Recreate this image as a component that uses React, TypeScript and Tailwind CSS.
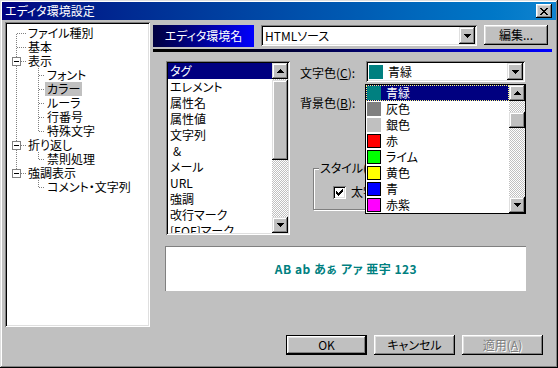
import React from 'react';

const raised =
  'shadow-[inset_-1px_-1px_#000000,inset_1px_1px_#ffffff,inset_-2px_-2px_#808080,inset_2px_2px_#dfdfdf]';
const sbRaised =
  'shadow-[inset_-1px_-1px_#000000,inset_1px_1px_#dfdfdf,inset_-2px_-2px_#808080,inset_2px_2px_#ffffff]';
const sunken =
  'shadow-[inset_1px_1px_#808080,inset_-1px_-1px_#ffffff,inset_2px_2px_#000000,inset_-2px_-2px_#dfdfdf]';
const dither = 'bg-[repeating-conic-gradient(#c0c0c0_0%_25%,#ffffff_0%_50%)] bg-size-[2px_2px]';

const Arrow = ({ up = false }: { up?: boolean }) => (
  <svg width="7" height="4" viewBox="0 0 7 4" shapeRendering="crispEdges">
    {up ? (
      <path d="M3 0h1v1h1v1h1v1h1v1H0V3h1V2h1V1h1z" fill="#000" />
    ) : (
      <path d="M0 0h7v1H6v1H5v1H4v1H3V3H2V2H1V1H0z" fill="#000" />
    )}
  </svg>
);

const ScrollBtn = ({ up = false, h = 'h-[16px]' }: { up?: boolean; h?: string }) => (
  <div className={`w-[16px] ${h} shrink-0 bg-[#c0c0c0] ${sbRaised} flex items-center justify-center`}>
    <Arrow up={up} />
  </div>
);

type V = 'full' | 'top' | 'bottom' | 'none';
type Row = { t: string; lvl: 0 | 1; v0: V; v1?: V; box?: boolean; sel?: boolean };

const rows: Row[] = [
  { t: 'ファイル種別', lvl: 0, v0: 'bottom' },
  { t: '基本', lvl: 0, v0: 'full' },
  { t: '表示', lvl: 0, v0: 'full', box: true },
  { t: 'フォント', lvl: 1, v0: 'full', v1: 'full' },
  { t: 'カラー', lvl: 1, v0: 'full', v1: 'full', sel: true },
  { t: 'ルーラ', lvl: 1, v0: 'full', v1: 'full' },
  { t: '行番号', lvl: 1, v0: 'full', v1: 'full' },
  { t: '特殊文字', lvl: 1, v0: 'full', v1: 'top' },
  { t: '折り返し', lvl: 0, v0: 'full', box: true },
  { t: '禁則処理', lvl: 1, v0: 'full', v1: 'top' },
  { t: '強調表示', lvl: 0, v0: 'top', box: true },
  { t: 'コメント・文字列', lvl: 1, v0: 'none', v1: 'top' },
];

function Connector({ r }: { r: Row }) {
  const w = r.lvl === 0 ? 18 : 37;
  const px: [number, number][] = [];
  const vert = (x: number, a: number, b: number) => {
    for (let y = a; y < b; y++) if ((x + y) % 2 === 0) px.push([x, y]);
  };
  const horz = (y: number, a: number, b: number) => {
    for (let x = a; x < b; x++) if ((x + y) % 2 === 0) px.push([x, y]);
  };
  if (r.box) {
    vert(8, 0, 3);
    if (r.v0 === 'full') vert(8, 12, 14);
    horz(7, 13, 18);
  } else if (r.lvl === 0) {
    if (r.v0 === 'full') vert(8, 0, 14);
    if (r.v0 === 'bottom') vert(8, 7, 14);
    horz(7, 8, 18);
  } else {
    if (r.v0 === 'full') vert(8, 0, 14);
    if (r.v1 === 'full') vert(30, 0, 14);
    if (r.v1 === 'top') vert(30, 0, 8);
    horz(7, 30, 37);
  }
  return (
    <svg width={w} height={14} className="shrink-0" shapeRendering="crispEdges">
      {px.map(([x, y]) => (
        <rect key={`${x}-${y}`} x={x} y={y} width={1} height={1} fill="#808080" />
      ))}
      {r.box && (
        <>
          <rect x={4.5} y={3.5} width={8} height={8} fill="#ffffff" stroke="#808080" />
          <rect x={6} y={7} width={5} height={1} fill="#000000" />
        </>
      )}
    </svg>
  );
}

const listItems = ['タグ', 'エレメント', '属性名', '属性値', '文字列', '&', 'メール', 'URL', '強調', '改行マーク', '[EOF]マーク'];

const colors: [string, string, boolean][] = [
  ['青緑', 'bg-[#008080]', false],
  ['灰色', 'bg-[#808080]', false],
  ['銀色', 'bg-[#c0c0c0]', false],
  ['赤', 'bg-[#ff0000]', true],
  ['ライム', 'bg-[#00ff00]', true],
  ['黄色', 'bg-[#ffff00]', true],
  ['青', 'bg-[#0000ff]', true],
  ['赤紫', 'bg-[#ff00ff]', true],
];

const App = () => {
  return (
    <div
      className={`w-[558px] h-[368px] bg-[#c0c0c0] p-[2px] flex flex-col text-[12px] text-black font-['Noto_Sans_CJK_JP',sans-serif] [font-feature-settings:'palt'] shadow-[inset_-1px_-1px_#000000,inset_1px_1px_#dfdfdf,inset_-2px_-2px_#808080,inset_2px_2px_#ffffff]`}
    >
      {/* title bar */}
      <div className="h-[18px] shrink-0 flex items-center justify-between bg-linear-to-r from-[#000080] to-[#1084d0] pl-[3px] pr-[4px]">
        <span className="text-white leading-[18px]">エディタ環境設定</span>
        <div className={`w-[16px] h-[14px] bg-[#c0c0c0] ${raised} flex items-center justify-center`}>
          <svg width="8" height="7" viewBox="0 0 8 7" shapeRendering="crispEdges">
            <path
              d="M0 0h2v1h1v1h2V1h1V0h2v1H7v1H6v1H5v1h1v1h1v1h1v1H6V6H5V5H3v1H2v1H0V6h1V5h1V4h1V3H2V2H1V1H0z"
              fill="#000"
            />
          </svg>
        </div>
      </div>

      <div className="flex pl-[3px] pt-[2px] gap-[3px]">
        {/* tree */}
        <div className={`w-[145px] h-[305px] shrink-0 bg-white ${sunken} pt-[4px] pl-[3px] overflow-hidden`}>
          {rows.map((r) => (
            <div key={r.t} className="flex h-[14px] items-center">
              <Connector r={r} />
              <span className={`px-[2px] h-[14px] leading-[14px] whitespace-nowrap ${r.sel ? 'bg-[#c0c0c0]' : ''}`}>
                {r.t}
              </span>
            </div>
          ))}
        </div>

        {/* right side */}
        <div className="w-[399px] flex flex-col">
          <div className="flex items-start mt-[3px]">
            <div className="w-[101px] h-[22px] bg-linear-to-r from-[#000040] to-[#0000ff] text-white flex items-center justify-center">
              エディタ環境名
            </div>
            <div className={`ml-[7px] w-[216px] h-[21px] bg-white ${sunken} flex items-center pl-[4px] pr-[2px]`}>
              <span className="flex-1">HTMLソース</span>
              <ScrollBtn h="h-[17px]" />
            </div>
            <div className={`ml-[7px] w-[64px] h-[20px] bg-[#c0c0c0] ${raised} flex items-center justify-center`}>
              編集...
            </div>
          </div>

          <div className="mt-[2px] h-[3px] w-[399px] bg-linear-to-r from-[#000000] to-[#0000ff]" />

          <div className="flex mt-[9px] ml-[13px]">
            {/* element list */}
            <div className={`w-[124px] h-[174px] shrink-0 bg-white ${sunken} p-[2px] flex`}>
              <div className="flex-1 overflow-hidden">
                {listItems.map((t, i) => (
                  <div
                    key={t}
                    className={`h-[16px] leading-[16px] pl-[2px] whitespace-nowrap ${i === 0 ? 'bg-[#000080] text-white' : ''}`}
                  >
                    {t === '&' ? <span className="pl-[3px]">&amp;</span> : t}
                  </div>
                ))}
              </div>
              <div className="w-[16px] flex flex-col">
                <ScrollBtn up />
                <div className={`h-[1px] ${dither}`} />
                <div className={`h-[80px] bg-[#c0c0c0] ${sbRaised}`} />
                <div className={`flex-1 ${dither}`} />
                <ScrollBtn />
              </div>
            </div>

            {/* colour settings */}
            <div className="flex flex-col">
              <div className="flex items-start">
                <span className="pl-[10px] w-[76px] pt-[4px] leading-[16px]">
                  文字色(<u>C</u>):
                </span>
                <div className="relative">
                  <div className={`w-[159px] h-[21px] bg-white ${sunken} flex items-center pl-[3px] pr-[2px]`}>
                    <div className="w-[14px] h-[14px] bg-[#008080]" />
                    <span className="flex-1 pl-[5px]">青緑</span>
                    <ScrollBtn h="h-[17px]" />
                  </div>

                  {/* open dropdown */}
                  <div className="absolute z-10 top-[23px] left-[-1px] w-[161px] h-[130px] border border-black bg-white flex">
                    <div className="flex-1">
                      {colors.map(([name, bg, framed], i) => (
                        <div
                          key={name}
                          className={`h-[16px] flex items-center ${
                            i === 0 ? 'bg-[#000080] text-white border border-dotted border-[#ffff80]' : 'pl-[1px]'
                          }`}
                        >
                          <div className={`w-[14px] h-[14px] shrink-0 ${bg} ${framed ? 'border border-black' : ''}`} />
                          <span className="pl-[5px] leading-[16px]">{name}</span>
                        </div>
                      ))}
                    </div>
                    <div className="w-[16px] flex flex-col">
                      <ScrollBtn up />
                      <div className={`h-[11px] ${dither}`} />
                      <div className={`h-[16px] bg-[#c0c0c0] ${sbRaised}`} />
                      <div className={`flex-1 ${dither}`} />
                      <ScrollBtn />
                    </div>
                  </div>
                </div>
              </div>

              <div className="flex items-start mt-[9px] h-[21px]">
                <span className="pl-[10px] w-[76px] pt-[4px] leading-[16px]">
                  背景色(<u>B</u>):
                </span>
              </div>

              {/* style group */}
              <div className="relative mt-[56px] ml-[23px] w-[211px] h-[42px] border border-[#808080] shadow-[inset_1px_1px_#ffffff,1px_1px_#ffffff]">
                <span className="absolute top-[-9px] left-[5px] px-[1px] bg-[#c0c0c0] leading-[16px]">
                  スタイル(<u>S</u>)
                </span>
                <div className="flex items-center mt-[15px] ml-[19px]">
                  <div className={`w-[13px] h-[13px] bg-white ${sunken} flex items-center justify-center`}>
                    <svg width="7" height="7" viewBox="0 0 7 7" shapeRendering="crispEdges">
                      <path d="M6 0h1v3H6v1H5v1H4v1H3v1H2V6H1V5H0V2h1v1h1v1h1V3h1V2h1V1h1z" fill="#000" />
                    </svg>
                  </div>
                  <span className="ml-[5px] leading-[16px]">太字</span>
                </div>
              </div>
            </div>
          </div>

          {/* preview */}
          <div className="mt-[11px] ml-[12px] w-[361px] h-[45px] bg-white border-t border-l border-[#808080] flex items-center justify-center">
            <span className="font-bold text-[#008080] tracking-[0.5px]">AB ab あぁ アァ 亜宇 123</span>
          </div>
        </div>
      </div>

      {/* buttons */}
      <div className="flex justify-end gap-[7px] pr-[13px] mt-[8px]">
        <div className={`w-[81px] h-[20px] bg-[#c0c0c0] border border-black ${raised} flex items-center justify-center`}>
          OK
        </div>
        <div className={`w-[81px] h-[20px] bg-[#c0c0c0] ${raised} flex items-center justify-center`}>キャンセル</div>
        <div
          className={`w-[81px] h-[20px] bg-[#c0c0c0] ${raised} flex items-center justify-center text-[#808080] [text-shadow:1px_1px_#ffffff]`}
        >
          適用(<u>A</u>)
        </div>
      </div>
    </div>
  );
};

export default App;
